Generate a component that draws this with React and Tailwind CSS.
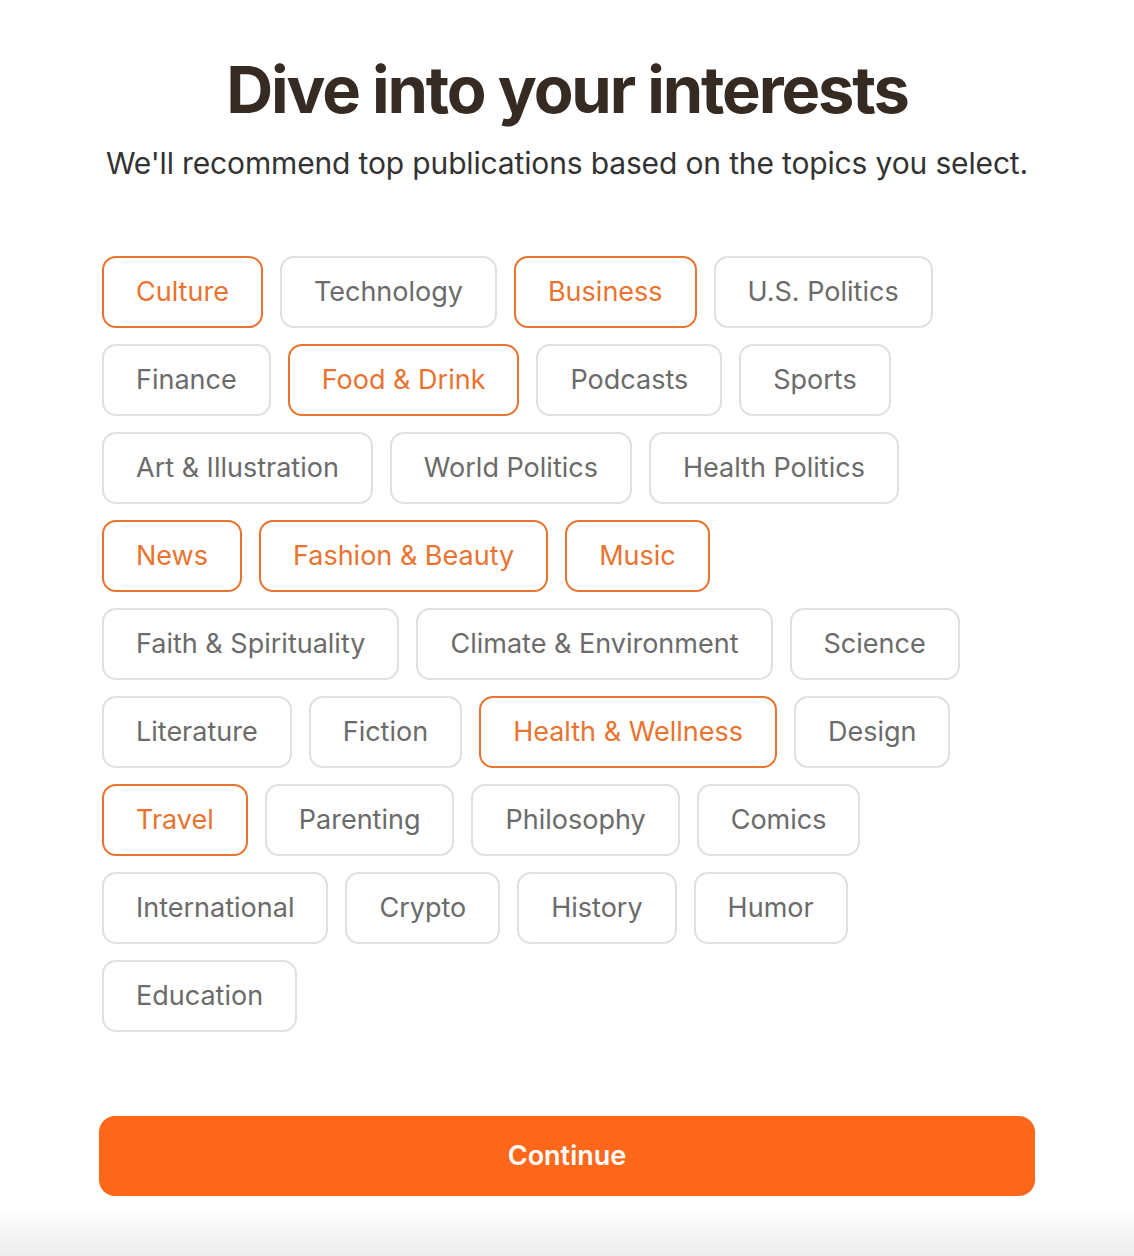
import React, { useState } from "react";

const topics = [
  ["Culture", true],
  ["Technology", false],
  ["Business", true],
  ["U.S. Politics", false],
  ["Finance", false],
  ["Food & Drink", true],
  ["Podcasts", false],
  ["Sports", false],
  ["Art & Illustration", false],
  ["World Politics", false],
  ["Health Politics", false],
  ["News", true],
  ["Fashion & Beauty", true],
  ["Music", true],
  ["Faith & Spirituality", false],
  ["Climate & Environment", false],
  ["Science", false],
  ["Literature", false],
  ["Fiction", false],
  ["Health & Wellness", true],
  ["Design", false],
  ["Travel", true],
  ["Parenting", false],
  ["Philosophy", false],
  ["Comics", false],
  ["International", false],
  ["Crypto", false],
  ["History", false],
  ["Humor", false],
  ["Education", false],
];

const App = () => {
  const [selected, setSelected] = useState(
    topics.filter(([, on]) => on).map(([name]) => name)
  );

  const toggle = (name) => {
    setSelected((prev) =>
      prev.includes(name) ? prev.filter((n) => n !== name) : [...prev, name]
    );
  };

  return (
    <div
      className="min-h-[1256px] bg-gradient-to-b from-white from-[96%] to-[#ededed] flex justify-center"
      style={{ fontFamily: "Inter, 'Liberation Sans', sans-serif" }}
    >
      <div className="w-[936px] flex flex-col pt-[54px]">
        <h1 className="text-center text-[65px] leading-[72px] font-bold tracking-[-0.033em] text-[#362b22]">
          Dive into your interests
        </h1>
        <p className="mt-[18px] text-center text-[30px] leading-[38px] text-[#333333] tracking-[-0.005em]">
          We'll recommend top publications based on the topics you select.
        </p>

        {/* Topic chips */}
        <div className="mt-[74px] ml-[3px] w-[900px] flex flex-wrap gap-x-[17px] gap-y-[16px]">
          {topics.map(([name]) => {
            const on = selected.includes(name);
            return (
              <button
                key={name}
                onClick={() => toggle(name)}
                className={
                  on
                    ? "h-[72px] px-[32px] rounded-[14px] border-2 border-[#e9732f] bg-white text-[#e9732f] text-[27px]"
                    : "h-[72px] px-[32px] rounded-[14px] border-2 border-[#e0e0e0] bg-white text-[#6b6b6b] text-[27px]"
                }
              >
                {name}
              </button>
            );
          })}
        </div>

        <button className="mt-[84px] h-[80px] w-full rounded-[16px] bg-[#ff681b] text-white text-[27px] font-semibold">
          Continue
        </button>
      </div>
    </div>
  );
};

export default App;
